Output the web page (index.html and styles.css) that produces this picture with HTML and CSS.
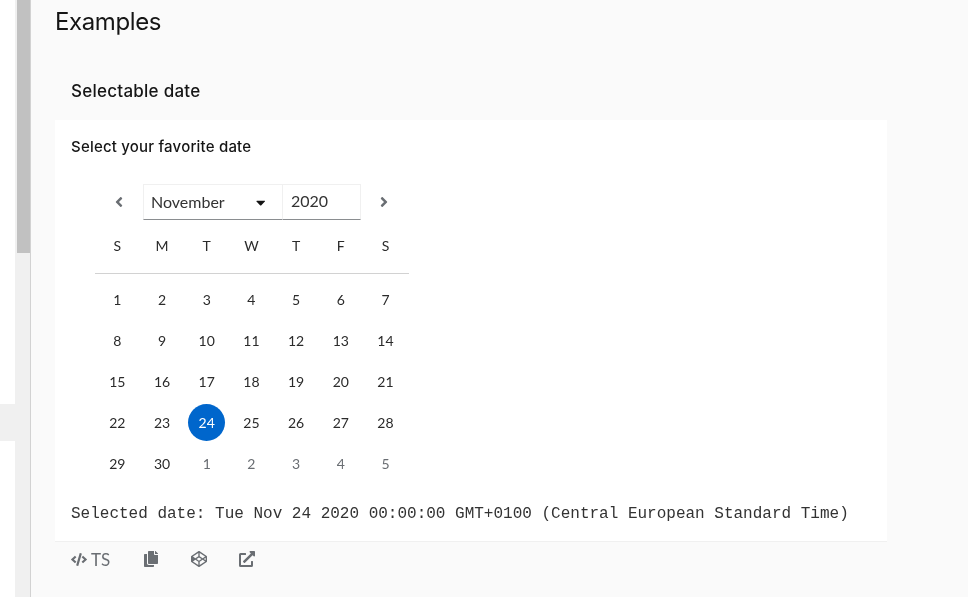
FILE: index.html
```html
<!DOCTYPE html>
<html lang="en">
<head>
<meta charset="utf-8">
<title>Examples</title>
<link rel="stylesheet" href="styles.css">
</head>
<body>
<div class="page">
  <aside class="sidebar">
    <div class="nav"><div class="nav-active"></div></div>
    <div class="scrolltrack"><div class="scrollthumb"></div></div>
  </aside>
  <main class="main">
    <h2 class="title">Examples</h2>
    <h3 class="subtitle">Selectable date</h3>
    <section class="card">
      <div class="card-body">
        <div class="label">Select your favorite date</div>
        <div class="calendar">
          <div class="cal-head">
            <button class="nav-btn"><svg viewBox="0 0 256 512" width="8" height="16"><path fill="#6a6e73" d="M31.700 239l136-136c9.400-9.400 24.600-9.400 33.900 0l22.600 22.600c9.400 9.400 9.400 24.600 0 33.900L127.900 256l96.400 96.400c9.400 9.400 9.400 24.600 0 33.900L201.700 409c-9.400 9.400-24.600 9.400-33.900 0l-136-136c-9.500-9.400-9.500-24.600-.1-34z"/></svg></button>
            <div class="select"><span>November</span><svg class="caret" viewBox="0 0 320 512" width="9.400" height="15"><path fill="#151515" d="M31.300 192h257.300c17.800 0 26.700 21.500 14.100 34.100L174.100 354.800c-7.800 7.800-20.500 7.800-28.300 0L17.200 226.100C4.600 213.500 13.500 192 31.300 192z"/></svg></div>
            <div class="year">2020</div>
            <button class="nav-btn"><svg viewBox="0 0 256 512" width="8" height="16"><path fill="#6a6e73" d="M224.300 273l-136 136c-9.400 9.400-24.600 9.400-33.900 0l-22.600-22.600c-9.400-9.400-9.400-24.600 0-33.900l96.400-96.400-96.400-96.400c-9.400-9.400-9.400-24.600 0-33.900L54.300 103c9.400-9.400 24.600-9.400 33.900 0l136 136c9.500 9.400 9.500 24.600.1 34z"/></svg></button>
          </div>
          <div class="week-head">
            <span>S</span><span>M</span><span>T</span><span>W</span><span>T</span><span>F</span><span>S</span>
          </div>
          <div class="days">
            <span>1</span><span>2</span><span>3</span><span>4</span><span>5</span><span>6</span><span>7</span>
            <span>8</span><span>9</span><span>10</span><span>11</span><span>12</span><span>13</span><span>14</span>
            <span>15</span><span>16</span><span>17</span><span>18</span><span>19</span><span>20</span><span>21</span>
            <span>22</span><span>23</span><span class="selected">24</span><span>25</span><span>26</span><span>27</span><span>28</span>
            <span>29</span><span>30</span><span class="other">1</span><span class="other">2</span><span class="other">3</span><span class="other">4</span><span class="other">5</span>
          </div>
        </div>
        <pre class="result">Selected date: Tue Nov 24 2020 00:00:00 GMT+0100 (Central European Standard Time)</pre>
      </div>
    </section>
    <div class="toolbar">
      <span class="tool tool-ts"><svg viewBox="0 0 640 512" width="16" height="13"><path fill="#6a6e73" d="M278.900 511.500l-61-17.700c-6.400-1.800-10-8.500-8.200-14.900L346.200 8.700c1.800-6.400 8.500-10 14.900-8.200l61 17.700c6.400 1.800 10 8.500 8.200 14.900L293.800 503.300c-1.900 6.400-8.500 10.100-14.900 8.200zm-114-112.200l43.500-46.400c4.600-4.900 4.300-12.700-.8-17.200L117 256l90.600-79.700c5.100-4.500 5.500-12.300.8-17.200l-43.500-46.400c-4.500-4.800-12.100-5.100-17-.5L3.800 247.200c-5.100 4.700-5.100 12.800 0 17.500l144.100 135.100c4.900 4.600 12.500 4.400 17-.5zm327.200.6l144.100-135.100c5.100-4.700 5.100-12.800 0-17.500L492.100 112.100c-4.800-4.500-12.400-4.300-17 .5L431.600 159c-4.600 4.900-4.300 12.700.8 17.200L523 256l-90.600 79.700c-5.100 4.500-5.500 12.300-.8 17.200l43.500 46.400c4.500 4.900 12.100 5.100 17 .6z"/></svg><span>TS</span></span>
      <span class="tool tool-copy"><svg viewBox="0 0 448 512" width="14" height="16"><path fill="#6a6e73" d="M320 448v40c0 13.300-10.700 24-24 24H24c-13.300 0-24-10.700-24-24V120c0-13.300 10.700-24 24-24h72v296c0 30.900 25.100 56 56 56h168zm0-344V0H152c-13.300 0-24 10.700-24 24v368c0 13.300 10.700 24 24 24h272c13.300 0 24-10.700 24-24V128H344c-13.200 0-24-10.800-24-24zm120.970-31.030L375.030 7.030A24 24 0 0 0 358.060 0H352v96h96v-6.060a24 24 0 0 0-7.030-16.970z"/></svg></span>
      <span class="tool"><svg viewBox="0 0 512 512" width="16" height="16"><path fill="#6a6e73" d="M502.300 159.700l-234-156c-8-4.900-16.500-5-24.600 0l-234 156C3.700 163.700 0 170.800 0 178v156c0 7.100 3.700 14.200 9.700 18.300l234 156c8 4.900 16.500 5 24.600 0l234-156c6-4 9.700-11.100 9.700-18.300V178c0-7.100-3.700-14.200-9.700-18.300zM278 63.100l172.300 114.900-76.900 51.400L278 165.700V63.100zm-44 0v102.600l-95.400 63.700-76.900-51.400L234 63.100zM44 219.100v73.800L99.200 256 44 219.100zM234 448.900L61.700 334l76.900-51.400L234 346.300v102.600zm22-140.900l-77.700-52 77.700-52 77.700 52-77.700 52zm22 140.900V346.300l95.400-63.700 76.900 51.400L278 448.900zm190-156l-55.200-36.900L468 219.100v73.800z"/></svg></span>
      <span class="tool"><svg viewBox="0 0 512 512" width="16" height="16"><path fill="#6a6e73" d="M432 320h-32a16 16 0 0 0-16 16v112H64V128h144a16 16 0 0 0 16-16V80a16 16 0 0 0-16-16H48a48 48 0 0 0-48 48v352a48 48 0 0 0 48 48h352a48 48 0 0 0 48-48V336a16 16 0 0 0-16-16zM488 0H360c-21.370 0-32.050 25.910-17 41l35.730 35.730L135 320.370a24 24 0 0 0 0 34L157.670 377a24 24 0 0 0 34 0l243.610-243.680L471 169c15 15 41 4.500 41-17V24a24 24 0 0 0-24-24z"/></svg></span>
    </div>
  </main>
</div>
</body>
</html>
```

FILE: styles.css
```css
* { box-sizing: border-box; }
html, body { margin: 0; height: 100%; overflow: hidden; background: #fff; }
body { font-family: "Lato", "Liberation Sans", sans-serif; color: #2b2b2b; }
.page { display: flex; height: 597px; }
.sidebar { width: 31px; flex: none; display: flex; border-right: 1px solid #d2d2d2; background: #fff; }
.nav { width: 15px; flex: none; padding-top: 404px; }
.nav-active { height: 37px; background: #f0f0f0; }
.scrolltrack { width: 15px; background: #f0f0f0; }
.scrollthumb { width: 13px; height: 253px; margin-left: 2px; background: #c1c1c1; }
.main { flex: 1; background: #fafafa; padding: 8px 0 0 24px; }
.title, .subtitle, .label, .calendar, .result, .toolbar { will-change: transform; }
.title { margin: 0; font-family: "Inter", sans-serif; font-weight: 400; font-size: 24px; line-height: 28px; letter-spacing: -0.4px; color: #151515; }
.subtitle { margin: 43px 0 0; padding-left: 16px; font-family: "Inter", sans-serif; font-weight: 450; font-size: 17px; line-height: 24px; height: 41px; letter-spacing: 0.25px; color: #151515; }
.card { width: 832px; background: #fff; border-bottom: 1px solid #f0f0f0; }
.card-body { padding: 16px 16px 0; height: 421px; }
.label { font-family: "Inter", sans-serif; font-weight: 450; font-size: 15px; line-height: 21px; letter-spacing: 0.2px; color: #151515; }
.calendar { width: 314px; margin: 27px 0 0 24px; }
.cal-head { display: flex; align-items: flex-start; height: 36px; padding-left: 19px; }
.nav-btn { width: 29px; height: 36px; border: 0; padding: 0 0 1px 1px; background: none; display: flex; align-items: center; justify-content: flex-start; }
.select { width: 139px; height: 36px; display: flex; align-items: center; justify-content: space-between; padding: 0 17px 2px 7px; font-size: 16px; color: #333; border: 1px solid #f0f0f0; border-bottom: 1px solid #8a8d90; border-right: 0; }
.select .caret { margin-top: 2px; }
.year { width: 79px; height: 36px; line-height: 32px; padding-left: 8px; font-size: 16px; color: #333; border: 1px solid #f0f0f0; border-bottom: 1px solid #8a8d90; margin-right: 18px; }
.week-head { display: grid; grid-template-columns: repeat(7, 44.7px); height: 46px; margin-top: 8px; border-bottom: 1px solid #d2d2d2; font-size: 14px; text-align: center; line-height: 21px; padding-top: 7px; }
.days { display: grid; grid-template-columns: repeat(7, 44.7px); grid-auto-rows: 41px; padding-top: 5px; font-size: 14px; }
.days span { display: flex; align-items: center; justify-content: center; width: 37px; height: 37px; margin: 2px auto; border-radius: 50%; }
.days .selected { background: #06c; color: #fff; }
.days .other { color: #6a6e73; }
.result { margin: 18px 0 0; font-family: "Liberation Mono", monospace; font-size: 16px; line-height: 24px; color: #333; }
.toolbar { display: flex; align-items: center; height: 34px; padding-left: 16px; color: #6a6e73; }
.tool { display: flex; align-items: center; width: 48px; }
.tool-ts { gap: 4px; width: 73px; font-size: 17px; }
.tool-copy { width: 47px; }
```
